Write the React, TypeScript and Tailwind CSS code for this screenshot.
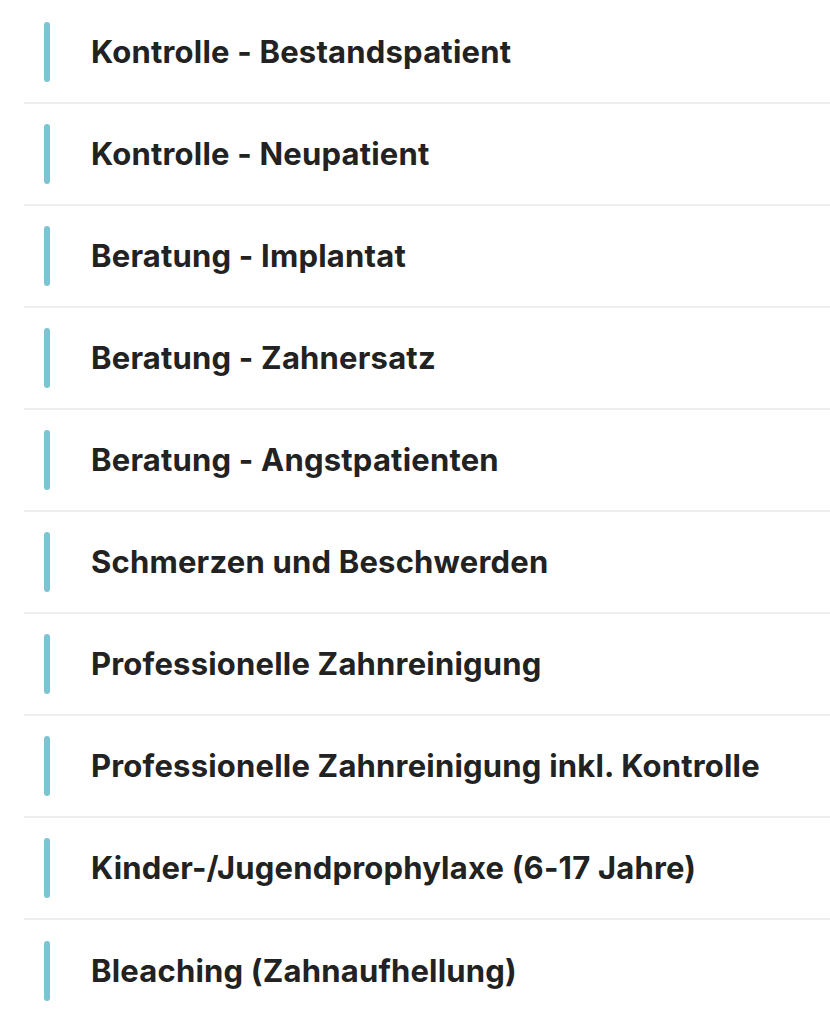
const items = [
  "Kontrolle - Bestandspatient",
  "Kontrolle - Neupatient",
  "Beratung - Implantat",
  "Beratung - Zahnersatz",
  "Beratung - Angstpatienten",
  "Schmerzen und Beschwerden",
  "Professionelle Zahnreinigung",
  "Professionelle Zahnreinigung inkl. Kontrolle",
  "Kinder-/Jugendprophylaxe (6-17 Jahre)",
  "Bleaching (Zahnaufhellung)",
];

export default function App() {
  return (
    <div className="min-h-screen bg-white pt-[2px] font-['Inter',sans-serif]">
      <ul className="ml-6 flex flex-col">
        {items.map((label, i) => (
          <li
            key={label}
            className={
              "flex h-[102px] items-center pl-5 " +
              (i < items.length - 1 ? "border-b-2 border-[#eeeeee]" : "")
            }
          >
            <span className="h-[60px] w-[6px] shrink-0 rounded-full bg-[#7cc4d1]" />
            <span className="ml-[41px] text-[31px] font-bold tracking-[0.2px] text-[#222222]">
              {label}
            </span>
          </li>
        ))}
      </ul>
    </div>
  );
}
